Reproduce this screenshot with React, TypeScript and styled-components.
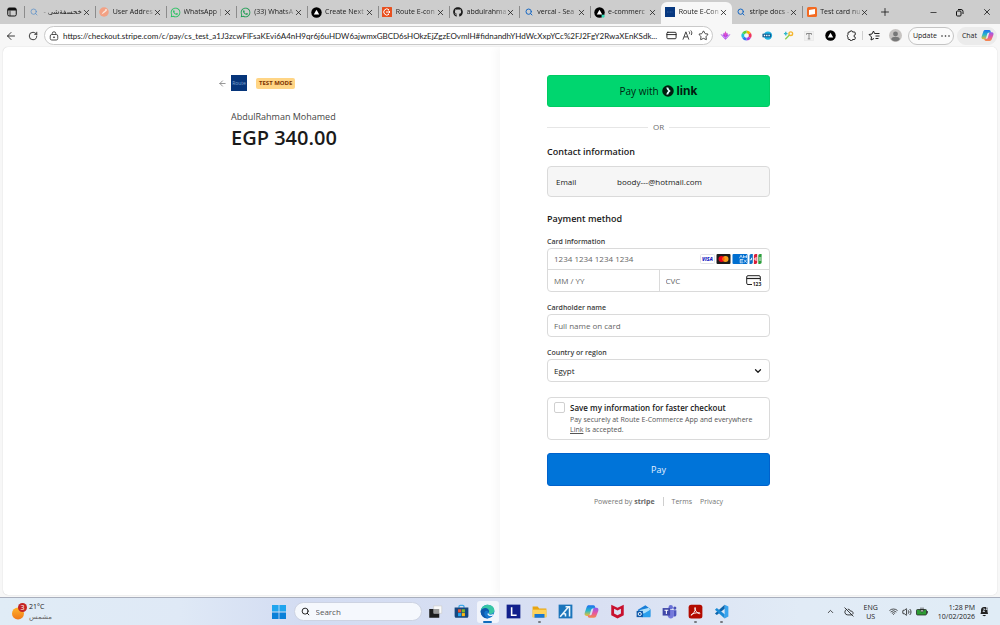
import React from "react";
import styled, { createGlobalStyle, css } from "styled-components";
import {
  ArrowLeft, ChevronDown, ChevronUp, CloudOff, CreditCard, Minus, Plus,
  RotateCw, Search, Star, Volume2, Wifi, X,
} from "lucide-react";
import { FaGithub, FaWhatsapp } from "react-icons/fa";

const UI = `"Open Sans", "Noto Sans", "DejaVu Sans", sans-serif`;

const GlobalStyle = createGlobalStyle`
  *, *::before, *::after { box-sizing: border-box; }
  body { margin: 0; font-family: ${UI}; color: #1a1a1a; font-size: 8px; }
  h1, h2, p, fieldset, ul { margin: 0; padding: 0; border: 0; list-style: none; }
  button, input, select { font: inherit; color: inherit; margin: 0; }
  svg { display: block; flex: none; }
`;

const Screen = styled.div`
  min-height: 100vh;
  display: flex;
  flex-direction: column;
  background: #f7f7f7;
`;

/* ---------- Browser chrome ---------- */

const TabBar = styled.header`
  display: flex;
  align-items: stretch;
  height: 24px;
  background: #cdcdcd;
`;

const PlainButton = styled.button<{ $w?: number }>`
  flex: none;
  width: ${(p) => p.$w ?? 20}px;
  padding: 0;
  border: 0;
  background: none;
  display: flex;
  align-items: center;
  justify-content: center;
`;

const Tabs = styled.ul`
  flex: 1;
  min-width: 0;
  display: flex;
`;

const Tab = styled.li<{ $active?: boolean; $bare?: boolean }>`
  flex: 1 1 0;
  min-width: 0;
  display: flex;
  align-items: center;
  padding: 0 4px 0 4px;
  font-size: 7px;
  line-height: 10px;
  position: relative;
  &::before {
    content: "";
    position: absolute;
    left: 0;
    top: 6px;
    height: 12px;
    width: 1px;
    background: ${(p) => (p.$bare ? "transparent" : "#8c8c8c")};
  }
  ${(p) => p.$active && css`
    background: #f7f7f7;
    border-radius: 6px 6px 0 0;
    margin-top: 2px;
    padding-bottom: 2px;
  `}
`;

const TabIcon = styled.span`
  flex: none;
  width: 11px;
  display: flex;
  justify-content: center;
`;

const TabTitle = styled.span<{ $rtl?: boolean }>`
  flex: 1;
  min-width: 0;
  margin-left: 3px;
  white-space: nowrap;
  mask-image: linear-gradient(${(p) => (p.$rtl ? "270deg" : "90deg")}, #000 75%, rgba(0, 0, 0, 0.25));
  direction: ${(p) => (p.$rtl ? "rtl" : "ltr")};
`;

const Spacer = styled.span`
  width: 24px;
`;

const Toolbar = styled.div`
  display: flex;
  align-items: center;
  height: 23px;
  padding-right: 3px;
  background: #f7f7f7;
`;

const AddressBar = styled.form`
  flex: 1;
  min-width: 0;
  height: 19px;
  margin-left: 1px;
  padding: 0 2px 0 4px;
  display: flex;
  align-items: center;
  gap: 4px;
  border: 1px solid #c9c9c9;
  border-radius: 10px;
  background: #fff;
`;

const AddressInput = styled.input`
  flex: 1;
  min-width: 0;
  border: 0;
  padding: 0;
  background: none;
  outline: 0;
  font-family: Lato, ${UI};
  font-size: 8px;
  line-height: 12px;
  text-overflow: ellipsis;
`;

const Extensions = styled.div`
  display: flex;
  align-items: center;
  margin-left: 2px;
`;

const Divider = styled.span`
  width: 1px;
  height: 9px;
  background: #cfcfcf;
`;

const ToolPill = styled.button<{ $filled?: boolean }>`
  height: 18px;
  display: flex;
  align-items: center;
  gap: 4px;
  padding: 0 ${(p) => (p.$filled ? 2 : 3)}px 0 4px;
  border: 1px solid ${(p) => (p.$filled ? "#ebebeb" : "#c4c4c4")};
  border-radius: 9px;
  background: ${(p) => (p.$filled ? "#ebebeb" : "#fbfbfb")};
  font-size: 7px;
  margin-left: 3px;
  white-space: nowrap;
`;

/* ---------- Checkout page ---------- */

const Page = styled.main`
  flex: 1;
  margin: 0 3px 2px;
  display: grid;
  grid-template-columns: 1fr 1fr;
  border-radius: 5px;
  overflow: hidden;
  background: #fff;
  box-shadow: 0 0 1px #bbb;
`;

const Summary = styled.section`
  padding: 28px 46px 28px 0;
  display: flex;
  justify-content: flex-end;
`;

const Column = styled.div`
  width: 223px;
`;

const PaySide = styled.section`
  padding: 28px 0 28px 47px;
  background: #fff;
  box-shadow: -4px 0 8px rgba(0, 0, 0, 0.03);
`;

const Merchant = styled.div`
  display: flex;
  align-items: center;
  height: 16px;
  margin-left: -13px;
`;

const BackLink = styled.a`
  color: #777;
  width: 13px;
`;

const MerchantLogo = styled.span`
  width: 16px;
  height: 16px;
  background: #06357a;
  color: #7fa3cf;
  font-size: 5px;
  line-height: 16px;
  text-align: center;
`;

const TestBadge = styled.span`
  margin-left: 9px;
  padding: 0 3px;
  height: 11px;
  border-radius: 2px;
  background: #ffd585;
  color: #7d3200;
  font-size: 6px;
  line-height: 11px;
  font-weight: 700;
`;

const MerchantName = styled.p`
  margin-top: 19px;
  font-size: 9px;
  line-height: 14px;
  color: #454545;
`;

const Amount = styled.h1`
  font-size: 20px;
  line-height: 27px;
  font-weight: 600;
`;

const Stack = styled.form`
  width: 223px;
  display: flex;
  flex-direction: column;
`;

const BigButton = styled.button<{ $link?: boolean }>`
  height: ${(p) => (p.$link ? 32 : 33)}px;
  margin-top: ${(p) => (p.$link ? 0 : 13)}px;
  display: flex;
  align-items: center;
  justify-content: center;
  gap: 3px;
  padding: 0;
  border: 1px solid ${(p) => (p.$link ? "#00cb62" : "#0062cc")};
  border-radius: 3px;
  background: ${(p) => (p.$link ? "#00d66f" : "#0074d9")};
  color: ${(p) => (p.$link ? "#011e0f" : "#e3f1ff")};
  font-size: ${(p) => (p.$link ? 10 : 9)}px;
  font-weight: 500;
`;

const LinkWord = styled.strong`
  font-family: Inter, sans-serif;
  font-size: 12px;
  font-weight: 700;
  line-height: 14px;
`;

const OrRule = styled.div`
  display: flex;
  align-items: center;
  gap: 5px;
  margin-top: 14px;
  font-size: 8px;
  line-height: 12px;
  color: #6b6b6b;
  &::before, &::after {
    content: "";
    flex: 1;
    height: 1px;
    background: #e6e6e6;
  }
`;

const Heading = styled.h2`
  margin-top: 12px;
  font-size: 9px;
  line-height: 14px;
  font-weight: 600;
`;

const outline = css`
  border: 1px solid #dadada;
  border-radius: 4px;
  background: #fff;
`;

const EmailBox = styled.div`
  ${outline}
  background: #f6f6f6;
  height: 31px;
  margin: 7px 0 3px;
  padding: 0 8px;
  display: grid;
  grid-template-columns: 61px 1fr;
  align-items: center;
`;

const Label = styled.label`
  display: block;
  margin-top: 10px;
  margin-bottom: 1px;
  font-size: 7px;
  line-height: 11px;
  font-weight: 600;
  color: #3c3c3c;
`;

const CardGroup = styled.div`
  ${outline}
  height: 44px;
  display: grid;
  grid-template: 1fr 1fr / 1fr 1fr;
`;

const Cell = styled.div<{ $wide?: boolean; $split?: boolean }>`
  grid-column: ${(p) => (p.$wide ? "1 / -1" : "auto")};
  border-bottom: ${(p) => (p.$wide ? "1px solid #dadada" : "0")};
  border-left: ${(p) => (p.$split ? "1px solid #dadada" : "0")};
  display: flex;
  align-items: center;
  gap: 2px;
  min-width: 0;
  padding: 0 7px 0 6px;
`;

const BareInput = styled.input`
  flex: 1;
  min-width: 0;
  width: 100%;
  border: 0;
  padding: 0;
  background: none;
  outline: 0;
  line-height: 12px;
  &::placeholder { color: #666; }
`;

const Field = styled.div`
  ${outline}
  height: 23px;
  padding: 0 6px;
  display: flex;
  align-items: center;
`;

const Select = styled.select`
  appearance: none;
  flex: 1;
  border: 0;
  padding: 0;
  background: none;
  outline: 0;
`;

const SaveBox = styled.div`
  ${outline}
  margin-top: 15px;
  min-height: 43px;
  padding: 4px 6px;
  display: flex;
  gap: 5px;
`;

const Check = styled.input`
  appearance: none;
  flex: none;
  width: 11px;
  height: 11px;
  border: 1px solid #d0d0d0;
  border-radius: 2px;
  background: #fff;
`;

const SaveTitle = styled.label`
  display: block;
  font-size: 8px;
  line-height: 11px;
  font-weight: 600;
  margin-bottom: 2px;
`;

const SaveText = styled.p`
  font-size: 7px;
  line-height: 10px;
  color: #555;
  a { color: inherit; }
`;

const Footer = styled.footer`
  display: flex;
  justify-content: center;
  align-items: center;
  gap: 8px;
  margin-top: 10px;
  font-size: 7px;
  line-height: 11px;
  color: #757575;
  a { color: inherit; text-decoration: none; }
  strong { font-weight: 700; color: #666; }
`;

/* ---------- Taskbar ---------- */

const Taskbar = styled.footer`
  height: 28px;
  display: grid;
  grid-template-columns: 1fr auto 1fr;
  align-items: center;
  border-top: 1px solid #a9afbd;
  background: linear-gradient(90deg, #e0ecf6 0%, #dfe9f6 18%, #d3dcf2 30%, #d9e0f3 60%, #e1ebf6 80%, #e0ecf6 100%);
`;

const Weather = styled.div`
  display: flex;
  align-items: center;
  gap: 2px;
  padding-left: 12px;
  font-size: 7px;
  line-height: 10px;
  p:last-child { color: #666; }
`;

const Dock = styled.div`
  display: flex;
  align-items: center;
`;

const DockButton = styled.button<{ $active?: boolean; $open?: boolean }>`
  width: 22px;
  height: 22px;
  margin: 0 2px;
  padding: 0;
  border: 0;
  border-radius: 3px;
  display: flex;
  align-items: center;
  justify-content: center;
  position: relative;
  background: ${(p) => (p.$active ? "#f1f4fb" : "transparent")};
  &::after {
    content: "";
    position: absolute;
    bottom: 0;
    width: ${(p) => (p.$active ? 9 : 3)}px;
    height: 2px;
    border-radius: 1px;
    background: ${(p) => (p.$active ? "#0f6cbd" : p.$open ? "#76797f" : "transparent")};
  }
`;

const SearchPill = styled.label`
  width: 128px;
  height: 19px;
  margin: 0 1px 0 2px;
  padding: 0 6px;
  display: flex;
  align-items: center;
  gap: 6px;
  border: 1px solid #cdd3e2;
  border-radius: 10px;
  background: #f5f8fd;
  input::placeholder { color: #555; }
`;

const Tray = styled.div`
  display: flex;
  align-items: center;
  justify-content: flex-end;
  padding-right: 11px;
  gap: 4px;
  font-size: 7px;
  line-height: 9px;
`;

const TrayText = styled.div<{ $right?: boolean }>`
  text-align: ${(p) => (p.$right ? "right" : "center")};
  margin: 0 ${(p) => (p.$right ? 0 : 7)}px 0 6px;
`;

const TrayIcon = styled.span`
  margin-right: 5px;
`;

/* ---------- Drawings ---------- */

const VercelMark = ({ dot }: { dot?: boolean }) => (
  <svg width="11" height="11" viewBox="0 0 20 20">
    <circle cx="10" cy="10" r="9.5" fill="#000" />
    <path d="M10 5l5 8.5H5z" fill="#fff" />
    {dot && <circle cx="16.5" cy="16.5" r="3" fill="#35dcb8" />}
  </svg>
);

const PostmanMark = () => (
  <svg width="10" height="10" viewBox="0 0 20 20">
    <circle cx="10" cy="10" r="9.5" fill="#f3a184" />
    <path d="M5 15l3-5 5-4 2 2-5 4z" fill="#fbe6dc" />
    <circle cx="14" cy="6" r="2" fill="#fbe6dc" />
  </svg>
);

const RouteMark = () => (
  <svg width="10" height="10" viewBox="0 0 20 20">
    <rect width="20" height="20" rx="1" fill="#e8501f" />
    <path d="M14 5.500a6.200 6.200 0 1 0 0 9M8 10h8M13 7l3 3-3 3" fill="none" stroke="#fff" strokeWidth="2" />
  </svg>
);

const NavyMark = () => (
  <svg width="10" height="10" viewBox="0 0 20 20">
    <rect width="20" height="20" fill="#073880" />
    <path d="M4 10h12" stroke="#2f5b9c" strokeWidth="2" strokeDasharray="2 1" />
  </svg>
);

const CardsMark = () => (
  <svg width="10" height="10" viewBox="0 0 20 20">
    <rect width="20" height="20" rx="3" fill="#f36a21" />
    <path d="M4 6l12-2v10l-12 2z" fill="#fff" />
  </svg>
);

const TabActionsIcon = () => (
  <svg width="10" height="10" viewBox="0 0 20 20">
    <rect x="1.500" y="2" width="17" height="16" rx="3" fill="none" stroke="#111" strokeWidth="2" />
    <path d="M1.500 5a3 3 0 0 1 3-3h11a3 3 0 0 1 3 3v2h-17z" fill="#111" />
    <path d="M6 7v11" stroke="#111" strokeWidth="1.500" />
  </svg>
);

const RestoreIcon = () => (
  <svg width="9" height="9" viewBox="0 0 18 18" fill="none" stroke="#111" strokeWidth="2">
    <rect x="3" y="6" width="9" height="10" rx="2" />
    <path d="M6 3h6a4 4 0 0 1 4 4v5" />
  </svg>
);

const LockIcon = () => (
  <svg width="10" height="10" viewBox="0 0 20 20" fill="none" stroke="#333" strokeWidth="1.700">
    <rect x="2.500" y="7" width="15" height="11" rx="3" />
    <path d="M6.500 7V5a3.500 3.500 0 0 1 7 0v2" />
    <circle cx="10" cy="12.500" r="1" fill="#333" />
  </svg>
);

const PuzzleIcon = () => (
  <svg width="11" height="11" viewBox="0 0 22 22" fill="none" stroke="#222" strokeWidth="2">
    <path d="M8 4a2.500 2.500 0 0 1 5 0h3.500a2 2 0 0 1 2 2v3.500a2.500 2.500 0 0 0 0 5V17a2 2 0 0 1-2 2H13a2.500 2.500 0 0 1-5 0H6a2 2 0 0 1-2-2v-3a3 3 0 0 1 0-5V6a2 2 0 0 1 2-2z" />
  </svg>
);

const BellIcon = () => (
  <svg width="10" height="11" viewBox="0 0 20 22">
    <path d="M3 16l1-4V8c0-4 3-6 6-6h7v9l1 5z" fill="#222" />
    <path d="M7 18h7c-1 3-6 3-7 0z" fill="#222" />
    <path d="M8 6h4l-4 5h4M14 3h3l-3 4h3" fill="none" stroke="#dfe9f5" strokeWidth="1.500" />
  </svg>
);

const Copilot = ({ size }: { size: number }) => (
  <svg width={size} height={size} viewBox="0 0 24 24">
    <defs>
      <linearGradient id="cpA" x1="0" y1="0" x2="0" y2="1">
        <stop offset="0" stopColor="#1c6ff0" />
        <stop offset=".5" stopColor="#28b8c9" />
        <stop offset="1" stopColor="#f2c12e" />
      </linearGradient>
      <linearGradient id="cpB" x1="0" y1="0" x2="0" y2="1">
        <stop offset="0" stopColor="#8f5cf0" />
        <stop offset=".5" stopColor="#e455a4" />
        <stop offset="1" stopColor="#f58a4b" />
      </linearGradient>
    </defs>
    <path d="M8 2h7c2 0 2.500 1.500 3 3l.5 2h-4c-2 0-2.800 1-3.300 3l-1.700 6c-.6 2-1.500 3-3.500 3H4c-3 0-3.500-2.500-2.800-5L4 5.500C4.700 3 6 2 8 2z" fill="url(#cpA)" />
    <path d="M16 22H9c-2 0-2.500-1.500-3-3l-.3-1h3.800c2 0 2.800-1 3.300-3l1.700-6c.6-2 1.500-3 3.500-3h2c3 0 3.500 2.500 2.800 5L20 18.500c-.7 2.500-2 3.500-4 3.500z" fill="url(#cpB)" />
  </svg>
);

const CardBrands = () => (
  <svg width="62" height="10" viewBox="0 0 62 10" role="img" aria-label="Visa, Mastercard, American Express, JCB">
    <rect x=".5" y=".5" width="14" height="9" rx="1" fill="#fff" stroke="#e3e3e8" />
    <text x="7.500" y="7" fontSize="5" fontWeight="800" fontStyle="italic" textAnchor="middle" fill="#1a1fc4">VISA</text>
    <rect x="16.500" width="14" height="10" rx="1" fill="#1c1c1c" />
    <circle cx="21.500" cy="5" r="3" fill="#eb001b" />
    <circle cx="25.500" cy="5" r="3" fill="#f79e1b" />
    <path d="M23.500 2.800a3 3 0 0 1 0 4.400a3 3 0 0 1 0-4.400" fill="#ff5f00" />
    <rect x="32.500" width="15" height="10" rx="1" fill="#016fd0" />
    <path d="M39.500 4.200l1.500-3 1.500 3M43.500 4V1.500l1.500 2 1.500-2V4M43 8.800h-3M43 7h-2.500M43 5.500h-3M40.200 5.500v3.300M43.800 5.500l3 3.300M46.800 5.500l-3 3.300" fill="none" stroke="#dcecfb" strokeWidth=".8" />
    <path d="M52.800 0h-1.600c-1 0-1.700.8-1.700 1.700V10h1.600c1 0 1.700-.8 1.700-1.700z" fill="#0b6fc4" />
    <path d="M57.200 0h-1.600c-1 0-1.700.8-1.700 1.700V10h1.600c1 0 1.700-.8 1.700-1.700z" fill="#d9203a" />
    <path d="M61.600 0H60c-1 0-1.700.8-1.700 1.700V10h1.600c1 0 1.700-.8 1.700-1.700z" fill="#2c9e3c" />
    <path d="M49.800 5.800h1.700V3.800M57 4h-2v2h2M59 4h2.300M59 6h2.300" fill="none" stroke="#fff" strokeWidth=".9" />
  </svg>
);

const CvcIcon = () => (
  <svg width="16" height="11" viewBox="0 0 16 11">
    <path d="M6 9.500H2A1.300 1.300 0 0 1 .7 8.200V2A1.300 1.300 0 0 1 2 .7h11A1.300 1.300 0 0 1 14.300 2v4" fill="none" stroke="#222" />
    <path d="M.7 3.500h13.500" stroke="#222" strokeWidth="1.200" />
    <text x="11" y="10.500" fontSize="5" fontWeight="700" textAnchor="middle" fill="#222">123</text>
  </svg>
);

const LinkMark = () => (
  <svg width="12" height="12" viewBox="0 0 24 24">
    <circle cx="12" cy="12" r="11.500" fill="#011e0f" />
    <path d="M8.500 5h4c.8 3 2.500 5.500 5 7-2.500 1.500-4.200 4-5 7h-4c.6-2.800 2-5.200 4-7-2-1.800-3.400-4.200-4-7z" fill="#dff" />
  </svg>
);

const WeatherIcon = () => (
  <svg width="15" height="18" viewBox="0 0 15 18">
    <defs>
      <linearGradient id="sun" x1="0" y1="0" x2="0" y2="1">
        <stop offset="0" stopColor="#ffb52b" /><stop offset="1" stopColor="#f07818" />
      </linearGradient>
    </defs>
    <circle cx="6" cy="10.500" r="6" fill="url(#sun)" />
    <circle cx="10.500" cy="4.500" r="4.500" fill="#c42424" />
    <text x="10.500" y="7" fontSize="7" textAnchor="middle" fill="#fff">3</text>
  </svg>
);

const drawings: Record<string, React.ReactNode> = {
  task: <><path d="M9 3h13v12H9z" fill="#fafafa" stroke="#ccc" /><path d="M2 8h7v7h9v7H2z" fill="#1d1d1d" /><path d="M9 8h9v7H9z" fill="#999" /></>,
  store: <><path d="M8 6V4c0-1.500.8-2 2-2h4c1.200 0 2 .5 2 2v2" fill="none" stroke="#3ba8e8" strokeWidth="2" /><path d="M1 5.500h22V19c0 2-1 3-3 3H4c-2 0-3-1-3-3z" fill="#16477f" /><path d="M6.500 8.500h5v5h-5z" fill="#f2542d" /><path d="M12.500 8.500h5v5h-5z" fill="#83bb26" /><path d="M6.500 14.500h5v5h-5z" fill="#22a7f0" /><path d="M12.500 14.500h5v5h-5z" fill="#fdb813" /></>,
  edge: <><circle cx="12" cy="12" r="11" fill="#1678cf" /><path d="M1.200 11C2 4.500 7 1 12.500 1 19 1 23 5.500 23 10c0 4-3 6-6 6-2.500 0-3.500-1-3-2 1.500-2 .5-5.500-3.500-5.500C6 8.500 2 9 1.200 11z" fill="#38c6a5" /><path d="M1.200 11c2-5 9.500-6 12.300-2 1.200 2 .8 3.500.2 5C12 8.500 6 11 7 16c.6 3.500 3 6 6 7C6 23.500.5 18 1.200 11z" fill="#0f59ac" /><path d="M13.500 14c-.8 1.500 1 3 3.700 3 2 0 4-.8 5-1.700 0 0-.6 2-2.400 3.700C13 20 10 16 13.500 14z" fill="#eaf5fb" /></>,
  l: <><path d="M1 1h22v22H1z" fill="#12208c" /><path d="M9 5v13h8" fill="none" stroke="#fff" strokeWidth="2.500" /></>,
  folder: <><path d="M1 4h8l2.500 3H23v14H1z" fill="#e8a512" /><path d="M1 9h22v12H1z" fill="#ffd35a" /><path d="M4 16h16v6H4z" fill="#1977d2" /></>,
  chart: <><path d="M1 1h22v22H1z" fill="#1b75bb" /><path d="M3.500 20.500L17 4.500M8 15l4 1v4M12 4.500h6.500V20" fill="none" stroke="#e9f5fc" strokeWidth="2.500" /></>,
  shield: <path d="M2 1l10 5 10-5v17l-10 5-10-5zM6.500 7.500V15l5.500 3 5.500-3V7.500L12 10.500z" fill="#c8102e" fillRule="evenodd" />,
  mail: <><path d="M3 9l12-7 8 6v12H6z" fill="#1a7fd8" /><path d="M5 10l16-4 2 4-10 6z" fill="#aee0fa" /><path d="M13 15l10-6v12H9z" fill="#2aa0ed" /><path d="M1 11h10v10H1z" fill="#0d57a8" /><circle cx="6" cy="16" r="2.500" fill="none" stroke="#fff" strokeWidth="1.500" /></>,
  teams: <><circle cx="14" cy="5" r="3.500" fill="#6870d6" /><circle cx="20.500" cy="6.500" r="2.500" fill="#4a52b8" /><path d="M9 9.500h10V18c0 3-2 5-5 5s-5-2-5-5z" fill="#7479dc" /><path d="M19 10h4v7c0 2-1.500 3-4 3z" fill="#4d55bd" /><path d="M1 6.500h12v12H1z" fill="#4148a8" /><path d="M4 10h6M7 10v6" stroke="#fff" strokeWidth="1.700" /></>,
  acrobat: <><rect x="1" y="1" width="22" height="22" rx="4" fill="#b30b00" /><path d="M5 18c2-.5 7-7 7-11 0-2-1.500-2-1.300 0C11 10 15 15 18 15.500c2 0 1.500-2-1-1.700-4 0-9 1.500-11.500 3z" fill="none" stroke="#fff" strokeWidth="1.500" /></>,
  code: <><path d="M17 1l6 3v16l-6 3V1z" fill="#38a4ee" /><path d="M17 1v6.500L4.500 17.500 1.500 15z" fill="#0b64ac" /><path d="M17 23v-6.500L4.500 6.500 1.500 9z" fill="#1a8ad6" /></>,
  start: <><path d="M0 0h11.300v11.300H0zM12.700 0H24v11.300H12.700z" fill="#20a5ee" /><path d="M0 12.700h11.300V24H0zM12.700 12.700H24V24H12.700z" fill="#0a80d8" /></>,
};

const Art = ({ name, size = 15 }: { name: string; size?: number }) => (
  <svg width={size} height={size} viewBox="0 0 24 24">{drawings[name]}</svg>
);

const tabs: { title: string; icon: React.ReactNode; rtl?: boolean; active?: boolean }[] = [
  { title: "خحسفةشى -", icon: <Search size={8} color="#4e8ac9" />, rtl: true },
  { title: "User Addres", icon: <PostmanMark /> },
  { title: "WhatsApp |", icon: <FaWhatsapp size={11} color="#1fc05a" /> },
  { title: "(33) WhatsA", icon: <FaWhatsapp size={11} color="#159a4c" /> },
  { title: "Create Next", icon: <VercelMark /> },
  { title: "Route E-con", icon: <RouteMark /> },
  { title: "abdulrahma", icon: <FaGithub size={10} /> },
  { title: "vercal - Sea", icon: <Search size={8} color="#1567c4" strokeWidth={3} /> },
  { title: "e-commerc", icon: <VercelMark dot /> },
  { title: "Route E-Con", icon: <NavyMark />, active: true },
  { title: "stripe docs -", icon: <Search size={8} color="#1567c4" strokeWidth={3} /> },
  { title: "Test card nu", icon: <CardsMark /> },
];

const dock: { id: string; label: string; active?: boolean; open?: boolean }[] = [
  { id: "task", label: "Task view" },
  { id: "store", label: "Store" },
  { id: "edge", label: "Edge", active: true },
  { id: "l", label: "L" },
  { id: "folder", label: "File Explorer", open: true },
  { id: "chart", label: "Monitor" },
  { id: "copilot", label: "Copilot" },
  { id: "shield", label: "McAfee" },
  { id: "mail", label: "Outlook" },
  { id: "teams", label: "Teams" },
  { id: "acrobat", label: "Acrobat", open: true },
  { id: "code", label: "Code", open: true },
];

const url =
  "https://checkout.stripe.com/c/pay/cs_test_a1J3zcwFlFsaKEvi6A4nH9qr6j6uHDW6ajwmxGBCD6sHOkzEjZgzEOvmlH#fidnandhYHdWcXxpYCc%2FJ2FgY2RwaXEnKSdk...";

function BrowserTabs() {
  return (
    <TabBar>
      <PlainButton $w={24} aria-label="Tab actions"><TabActionsIcon /></PlainButton>
      <Tabs>
        {tabs.map((t, i) => (
          <Tab key={i} $active={t.active} $bare={t.active || tabs[i - 1]?.active}>
            <TabIcon>{t.icon}</TabIcon>
            <TabTitle $rtl={t.rtl}>{t.title}</TabTitle>
            <PlainButton $w={9} aria-label="Close tab"><X size={9} /></PlainButton>
          </Tab>
        ))}
      </Tabs>
      <PlainButton $w={24} aria-label="New tab"><Plus size={12} strokeWidth={1.7} /></PlainButton>
      <Spacer />
      <PlainButton $w={25} aria-label="Minimise"><Minus size={9} /></PlainButton>
      <PlainButton $w={27} aria-label="Restore"><RestoreIcon /></PlainButton>
      <PlainButton $w={27} aria-label="Close"><X size={10} /></PlainButton>
    </TabBar>
  );
}

function BrowserToolbar() {
  return (
    <Toolbar>
      <PlainButton $w={22} aria-label="Back"><ArrowLeft size={12} strokeWidth={1.7} /></PlainButton>
      <PlainButton $w={21} aria-label="Refresh"><RotateCw size={10} /></PlainButton>
      <AddressBar>
        <LockIcon />
        <AddressInput aria-label="Address" readOnly value={url} />
        <PlainButton $w={12} type="button" aria-label="Cards"><CreditCard size={11} /></PlainButton>
        <PlainButton $w={12} type="button" aria-label="Read aloud">
          <svg width="11" height="11" viewBox="0 0 24 24" fill="none" stroke="#333" strokeWidth="2">
            <path d="M2 21L8.500 4 15 21M4.500 15h8M15 3c2 1.500 2 4 1 6M19 1c3 3 3 7 1 10" />
          </svg>
        </PlainButton>
        <PlainButton $w={12} type="button" aria-label="Favourite"><Star size={11} strokeWidth={1.7} /></PlainButton>
      </AddressBar>
      <Extensions>
        <PlainButton $w={21} aria-label="Lotus">
          <svg width="11" height="11" viewBox="0 0 24 24"><path d="M12 21L1 9l6 2 1-5 4 3 4-3 1 5 6-2z" fill="#a63be6" /><path d="M12 2l3 7-3 7-3-7z" fill="#e04fc8" /><path d="M5 11l7 7 7-7" fill="none" stroke="#f4ddff" strokeWidth="1.500" /></svg>
        </PlainButton>
        <PlainButton $w={21} aria-label="Colour picker">
          <svg width="11" height="11" viewBox="0 0 24 24" fill="none" strokeWidth="6">
            <path d="M12 4a8 8 0 0 1 7 4" stroke="#f7b500" /><path d="M19 8a8 8 0 0 1 0 8" stroke="#f0355c" /><path d="M19 16a8 8 0 0 1-7 4" stroke="#b437e0" /><path d="M12 20a8 8 0 0 1-7-4" stroke="#2f7bf0" /><path d="M5 16a8 8 0 0 1 0-8" stroke="#21c3d6" /><path d="M5 8a8 8 0 0 1 7-4" stroke="#5bd13d" />
          </svg>
        </PlainButton>
        <PlainButton $w={21} aria-label="Web tool">
          <svg width="11" height="11" viewBox="0 0 24 24"><circle cx="13" cy="12" r="9" fill="#21b5e4" /><path d="M1 8h19v8H1z" fill="#0b5c93" /><path d="M4 12h13" stroke="#fff" strokeWidth="3" strokeDasharray="3 2" /></svg>
        </PlainButton>
        <PlainButton $w={21} aria-label="Keys">
          <svg width="11" height="11" viewBox="0 0 24 24" fill="none" strokeWidth="3"><circle cx="17" cy="8" r="4" stroke="#f5b62e" /><path d="M14 11L5 20" stroke="#8ccf4d" /><path d="M2 8h8M6 4v8" stroke="#34b8c9" /></svg>
        </PlainButton>
        <PlainButton $w={21} aria-label="Text tool">
          <svg width="10" height="10" viewBox="0 0 24 24"><path d="M1 1h22v22H1z" fill="#f1f1f1" stroke="#ddd" /><path d="M6 9V6h12v3M12 6v13M9 19h6" fill="none" stroke="#777" strokeWidth="2" /></svg>
        </PlainButton>
        <PlainButton $w={21} aria-label="Vercel"><VercelMark /></PlainButton>
        <PlainButton $w={21} aria-label="Extensions"><PuzzleIcon /></PlainButton>
        <Divider />
        <PlainButton $w={23} aria-label="Favourites">
          <svg width="12" height="11" viewBox="0 0 24 22" fill="none" stroke="#222" strokeWidth="2"><path d="M13 7h10M15 12h8M15 17h6M12 17l-6 3 1-6-5-5 6-1 3-6 2 5" /></svg>
        </PlainButton>
        <PlainButton $w={19} aria-label="Profile">
          <svg width="13" height="13" viewBox="0 0 24 24"><circle cx="12" cy="12" r="12" fill="#c6c3c1" /><circle cx="12" cy="9" r="4.500" fill="#777" /><path d="M4 19c1-6 15-6 16 0-4 5-12 5-16 0z" fill="#777" /></svg>
        </PlainButton>
      </Extensions>
      <ToolPill>
        Update
        <svg width="9" height="2" viewBox="0 0 9 2" fill="#222"><circle cx="1" cy="1" r=".8" /><circle cx="4.500" cy="1" r=".8" /><circle cx="8" cy="1" r=".8" /></svg>
      </ToolPill>
      <ToolPill $filled>Chat <Copilot size={13} /></ToolPill>
    </Toolbar>
  );
}

function Checkout() {
  return (
    <Page>
      <Summary>
        <Column>
          <Merchant>
            <BackLink href="#back" aria-label="Back"><ArrowLeft size={9} /></BackLink>
            <MerchantLogo>Route</MerchantLogo>
            <TestBadge>TEST MODE</TestBadge>
          </Merchant>
          <MerchantName>AbdulRahman Mohamed</MerchantName>
          <Amount>EGP 340.00</Amount>
        </Column>
      </Summary>
      <PaySide>
        <Stack onSubmit={(e) => e.preventDefault()}>
          <BigButton type="button" $link>Pay with <LinkMark /><LinkWord>link</LinkWord></BigButton>
          <OrRule>OR</OrRule>
          <Heading>Contact information</Heading>
          <EmailBox><span>Email</span><span>boody---@hotmail.com</span></EmailBox>
          <Heading>Payment method</Heading>
          <Label htmlFor="card">Card information</Label>
          <CardGroup role="group" aria-label="Card information">
            <Cell $wide><BareInput id="card" placeholder="1234 1234 1234 1234" /><CardBrands /></Cell>
            <Cell><BareInput aria-label="Expiry" placeholder="MM / YY" /></Cell>
            <Cell $split><BareInput aria-label="CVC" placeholder="CVC" /><CvcIcon /></Cell>
          </CardGroup>
          <Label htmlFor="holder">Cardholder name</Label>
          <Field><BareInput id="holder" placeholder="Full name on card" /></Field>
          <Label htmlFor="country">Country or region</Label>
          <Field>
            <Select id="country" defaultValue="Egypt"><option>Egypt</option></Select>
            <ChevronDown size={10} strokeWidth={3} />
          </Field>
          <SaveBox>
            <Check type="checkbox" id="save" />
            <div>
              <SaveTitle htmlFor="save">Save my information for faster checkout</SaveTitle>
              <SaveText>Pay securely at Route E-Commerce App and everywhere <a href="#link">Link</a> is accepted.</SaveText>
            </div>
          </SaveBox>
          <BigButton type="submit">Pay</BigButton>
          <Footer>
            <span>Powered by <strong>stripe</strong></span>
            <Divider />
            <a href="#terms">Terms</a>
            <a href="#privacy">Privacy</a>
          </Footer>
        </Stack>
      </PaySide>
    </Page>
  );
}

function DesktopTaskbar() {
  return (
    <Taskbar>
      <Weather>
        <WeatherIcon />
        <div><p>21°C</p><p>مشمس</p></div>
      </Weather>
      <Dock>
        <DockButton aria-label="Start"><Art name="start" size={14} /></DockButton>
        <SearchPill><Search size={9} strokeWidth={2.5} /><BareInput placeholder="Search" /></SearchPill>
        {dock.map((d) => (
          <DockButton key={d.id} aria-label={d.label} $active={d.active} $open={d.open}>
            {d.id === "copilot" ? <Copilot size={15} /> : <Art name={d.id} />}
          </DockButton>
        ))}
      </Dock>
      <Tray>
        <TrayIcon><ChevronUp size={9} /></TrayIcon>
        <CloudOff size={10} />
        <TrayText>ENG<br />US</TrayText>
        <Wifi size={9} />
        <Volume2 size={10} />
        <svg width="12" height="9" viewBox="0 0 24 18"><rect x="1" y="5" width="20" height="11" rx="2" fill="#2d9c34" stroke="#222" strokeWidth="1.500" /><path d="M22.500 8v5" stroke="#222" strokeWidth="2" /><path d="M10 1v5M14 1v5M8.500 6h7c0 5-7 5-7 0z" fill="#fff" stroke="#222" strokeWidth="1.500" /></svg>
        <TrayText as="time" $right>1:28 PM<br />10/02/2026</TrayText>
        <BellIcon />
      </Tray>
    </Taskbar>
  );
}

export default function App() {
  return (
    <Screen>
      <GlobalStyle />
      <BrowserTabs />
      <BrowserToolbar />
      <Checkout />
      <DesktopTaskbar />
    </Screen>
  );
}
